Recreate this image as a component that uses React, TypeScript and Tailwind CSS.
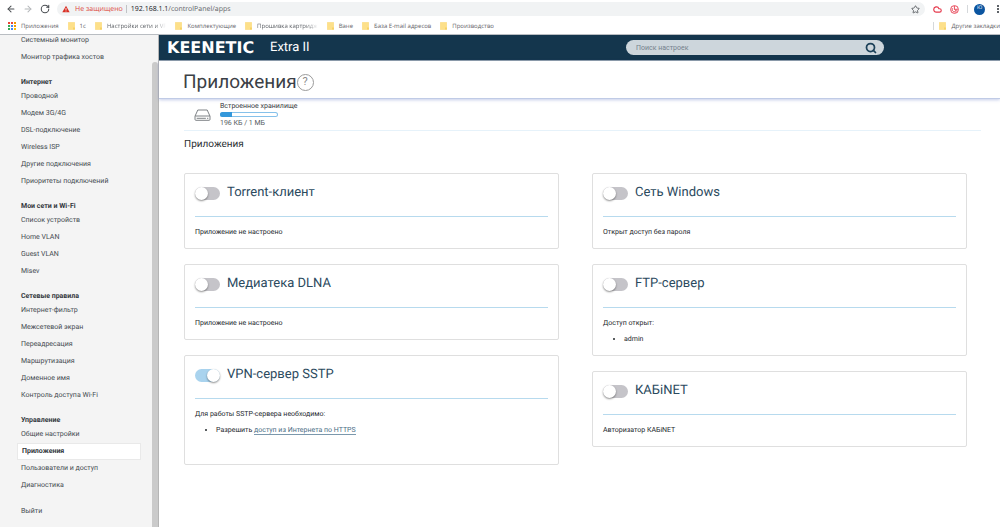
import type { ReactNode } from 'react';
import { ArrowLeft, ArrowRight, RotateCw, Search, Star, Cloud } from 'lucide-react';

type NavGroup = { title?: string; items: string[] };

const navGroups: NavGroup[] = [
  { items: ['Системный монитор', 'Монитор трафика хостов'] },
  {
    title: 'Интернет',
    items: ['Проводной', 'Модем 3G/4G', 'DSL-подключение', 'Wireless ISP', 'Другие подключения', 'Приоритеты подключений'],
  },
  { title: 'Мои сети и Wi-Fi', items: ['Список устройств', 'Home VLAN', 'Guest VLAN', 'Misev'] },
  {
    title: 'Сетевые правила',
    items: ['Интернет-фильтр', 'Межсетевой экран', 'Переадресация', 'Маршрутизация', 'Доменное имя', 'Контроль доступа Wi-Fi'],
  },
  { title: 'Управление', items: ['Общие настройки', 'Приложения', 'Пользователи и доступ', 'Диагностика'] },
];

const bookmarks = [
  { label: '1с' },
  { label: 'Настройки сети и VF', faded: true },
  { label: 'Комплектующие' },
  { label: 'Прошивка картридж', faded: true },
  { label: 'Ване' },
  { label: 'База E-mail адресов' },
  { label: 'Производство' },
];

const gridColors = ['#ea4335', '#ea4335', '#f29900', '#34a853', '#4285f4', '#f29900', '#34a853', '#4285f4', '#fbbc05'];

function FolderIcon() {
  return (
    <svg viewBox="0 0 7 8" className="h-2 w-[7px] shrink-0" aria-hidden="true">
      <path d="M.3.5h6.400v7h-6.400z" fill="#fde08a" stroke="#fbd56a" strokeWidth=".5" />
      <path d="M5.4 5.6h1.200v2h-1.200z" fill="#f4c84a" />
    </svg>
  );
}

function Browser() {
  return (
    <header className="shrink-0 border-b border-[#b9bdc2] bg-white font-['Open_Sans',sans-serif] text-[#5f6368]">
      <div className="flex h-[18px] items-center pl-1.5">
        <div className="flex w-[51px] shrink-0 items-center gap-[7px]">
          <button aria-label="Назад"><ArrowLeft className="size-2.5 text-[#4a4e52]" strokeWidth={2.5} /></button>
          <button aria-label="Вперёд"><ArrowRight className="size-2.5 text-[#b4b7ba]" strokeWidth={2.5} /></button>
          <button aria-label="Обновить"><RotateCw className="size-2.5 text-[#4a4e52]" strokeWidth={2.5} /></button>
        </div>
        <div className="flex h-3.5 min-w-0 flex-1 items-center rounded-full bg-[#f1f3f4] px-[5px] text-[7px] leading-4">
          <svg viewBox="0 0 10 10" className="size-2" aria-hidden="true">
            <path d="M5 .8 9.6 9H.4z" fill="#d93025" />
            <path d="M4.5 3.6h1v2.6h-1zM4.5 7h1v1h-1z" fill="#fff" />
          </svg>
          <span className="ml-[5px] pt-0.5 text-[#dd4b3f]">Не защищено</span>
          <span className="mr-1 ml-[3px] h-2 w-px bg-[#c0c3c6]" />
          <span className="pt-0.5"><span className="text-[#202124]">192.168.1.1</span>/controlPanel/apps</span>
          <button className="ml-auto" aria-label="Добавить в закладки"><Star className="size-[9px]" strokeWidth={2.5} /></button>
        </div>
        <div className="flex shrink-0 items-center pl-2">
          <Cloud className="size-[9px] text-[#e5394c]" strokeWidth={3} />
          <svg viewBox="0 0 9 9" className="ml-2 size-[9px]" aria-hidden="true" fill="none" stroke="#e5394c">
            <circle cx="4.5" cy="4.5" r="3.900" strokeWidth=".9" />
            <path d="M2.400 3.200a2.400 2.400 0 1 0 4.400 2.400M4.400 1v3.300h3.400M4.600 4.400l1.800 1.800" strokeWidth=".9" />
          </svg>
          <span className="ml-2 h-2 w-px bg-[#d5d8db]" />
          <span className="ml-1.5 flex size-[11px] items-center justify-center rounded-full bg-[#0b55a0] text-[5px] text-white">Ю</span>
          <button className="ml-2.5 flex w-[5px] flex-col items-center gap-px" aria-label="Меню">
            <span className="size-[2px] bg-[#5f6368]" />
            <span className="size-[2px] bg-[#5f6368]" />
            <span className="size-[2px] bg-[#5f6368]" />
          </button>
        </div>
      </div>
      <nav className="flex h-4 items-center gap-[9px] overflow-hidden pl-2 text-[6px] leading-3 whitespace-nowrap" aria-label="Закладки">
        <a href="#apps" className="flex shrink-0 items-center gap-[5px]">
          <span className="grid grid-cols-3 gap-px">
            {gridColors.map((c, i) => (
              <span key={i} className="size-[2px]" style={{ backgroundColor: c }} />
            ))}
          </span>
          Приложения
        </a>
        {bookmarks.map((b) => (
          <a key={b.label} href="#bookmark" className="flex shrink-0 items-center gap-[5px]">
            <FolderIcon />
            <span className={b.faded ? '[mask-image:linear-gradient(to_right,#000_80%,transparent)]' : ''}>{b.label}</span>
          </a>
        ))}
        <a href="#other" className="ml-auto flex shrink-0 items-center gap-[5px]">
          <span className="h-2 w-px shrink-0 bg-[#d5d8db]" />
          <FolderIcon />
          Другие закладки
        </a>
      </nav>
    </header>
  );
}

function NavItem({ label }: { label: string }) {
  const active = label === 'Приложения';
  return (
    <li>
      <a
        href="#section"
        aria-current={active ? 'page' : undefined}
        className={
          active
            ? 'block border border-[#e9e9e9] bg-white pl-1 leading-[15px] font-bold text-[#33383d]'
            : 'block pl-1 leading-[17px]'
        }
      >
        {label}
      </a>
    </li>
  );
}

function Sidebar() {
  return (
    <aside className="flex w-[159px] shrink-0 overflow-hidden border-r border-[#b5b5b5] bg-[#f4f4f4]">
      <nav className="-mt-[3px] flex-1 pr-[11px] pl-[17px] text-[7px] text-[#444b51]" aria-label="Разделы">
        {navGroups.map((g, i) => (
          <section key={i} className="mb-[11px]">
            {g.title && <h2 className="pl-1 leading-[11px] font-bold text-[#33383d]">{g.title}</h2>}
            <ul>{g.items.map((item) => <NavItem key={item} label={item} />)}</ul>
          </section>
        ))}
        <a href="#logout" className="block pl-1 leading-[13px]">Выйти</a>
      </nav>
      <div className="mt-[27px] w-1.5 rounded-t-full bg-[#cacaca]" />
    </aside>
  );
}

function AppCard({ id, title, on = false, className = '', children }: { id: string; title: string; on?: boolean; className?: string; children: ReactNode }) {
  return (
    <article className={`rounded-xs border border-[#dfdfdf] px-2.5 pt-[9px] pb-2 ${className}`}>
      <div className="flex h-5 items-center gap-[7px]">
        <input
          id={id}
          type="checkbox"
          role="switch"
          defaultChecked={on}
          className="flex h-[13px] w-[25px] shrink-0 appearance-none items-center rounded-full bg-[#c5c4c9] before:block before:size-[13px] before:rounded-full before:bg-white before:shadow-[0_1px_2px_rgba(0,0,0,0.45)] checked:justify-end checked:bg-[#a9d3ee]"
        />
        <label htmlFor={id} className="text-[13px] leading-[22px] text-[#2b4a5e]">{title}</label>
      </div>
      <hr className="mt-[13px] border-[#b7daee]" />
      <div className="mt-[7px] text-[7px] leading-4 text-[#23282d]">{children}</div>
    </article>
  );
}

export default function App() {
  return (
    <div className="flex h-screen flex-col overflow-hidden bg-white font-[Roboto,sans-serif] [text-rendering:geometricPrecision]">
      <Browser />
      <div className="flex min-h-0 flex-1">
        <Sidebar />
        <main className="min-w-0 flex-1">
          <div className="flex h-[26px] items-center border-b border-[#8d9ca8] bg-[#14364d] px-2 text-white">
            <span className="w-[103px] shrink-0 font-['DejaVu_Sans',sans-serif] text-[16px] leading-5 font-bold">KEENETIC</span>
            <span className="text-[13px] leading-[22px]">Extra II</span>
            <form className="mr-[108px] ml-auto flex h-[15px] w-[258px] items-center rounded-full bg-[#cdd6dc] pr-[7px] pl-2.5">
              <input type="search" aria-label="Поиск настроек" placeholder="Поиск настроек" className="min-w-0 flex-1 text-[7px] leading-3 placeholder:text-[#75828c]" />
              <button type="button" aria-label="Найти"><Search className="size-3 text-[#1c4159]" strokeWidth={3.5} /></button>
            </form>
          </div>
          <div className="flex h-[38px] items-center border-b border-[#c0cbe6] pt-[5px] pl-6 shadow-[0_1px_3px_rgba(110,130,200,0.4)]">
            <h1 className="text-[19px] leading-6 text-[#3b4046]">Приложения</h1>
            <button aria-label="Справка" className="flex size-[17px] items-center justify-center rounded-full border border-[#9a9a9a] text-[11px] leading-3 text-[#8a8a8a]">?</button>
          </div>
          <section className="mr-[19px] ml-[25px] flex items-center border-b border-[#e6f2fa] pt-px pb-px pl-2.5 text-[7px] text-[#33383d]">
            <svg viewBox="0 0 17 12" className="h-3 w-[17px]" aria-hidden="true" fill="none" stroke="#6f7478" strokeLinejoin="round">
              <path d="M3.8 1h9.4l2.8 6.2v3.2q0 .9-.9.9H1.900q-.9 0-.9-.9V7.200z" strokeWidth=".9" />
              <path d="M1.200 7h14.600M2.700 9.300h9.200M13 9.300h1.300" strokeWidth=".9" />
            </svg>
            <div className="ml-[9px]">
              <p className="leading-3">Встроенное хранилище</p>
              <div role="progressbar" aria-label="Занято" aria-valuenow={20} aria-valuemin={0} aria-valuemax={100} className="h-[5px] w-[58px] overflow-hidden rounded-full bg-white inset-ring inset-ring-[#86c1ea]">
                <div className="h-full w-1/5 bg-[#3498db]" />
              </div>
              <p className="leading-3 text-[#555b61]">196 КБ / 1 МБ</p>
            </div>
          </section>
          <h2 className="mt-2 ml-[25px] text-[10px] leading-3 text-[#2b2f33]">Приложения</h2>
          <div className="mt-[22px] mr-[33px] ml-[25px] grid grid-cols-2 items-start gap-x-[33px]">
            <div className="flex flex-col gap-[15px]">
              <AppCard id="torrent" title="Torrent-клиент"><p>Приложение не настроено</p></AppCard>
              <AppCard id="dlna" title="Медиатека DLNA"><p>Приложение не настроено</p></AppCard>
              <AppCard id="sstp" title="VPN-сервер SSTP" on className="min-h-[110px]">
                <p>Для работы SSTP-сервера необходимо:</p>
                <ul className="list-disc pl-[21px]">
                  <li>Разрешить <a href="#https" className="border-b border-[#7b98ac] text-[#4a6d85]">доступ из Интернета по HTTPS</a></li>
                </ul>
              </AppCard>
            </div>
            <div className="flex flex-col gap-[15px]">
              <AppCard id="windows" title="Сеть Windows"><p>Открыт доступ без пароля</p></AppCard>
              <AppCard id="ftp" title="FTP-сервер">
                <p>Доступ открыт:</p>
                <ul className="list-disc pl-[21px]"><li>admin</li></ul>
              </AppCard>
              <AppCard id="kabinet" title="КАБiNET"><p>Авторизатор КАБiNET</p></AppCard>
            </div>
          </div>
        </main>
      </div>
    </div>
  );
}
